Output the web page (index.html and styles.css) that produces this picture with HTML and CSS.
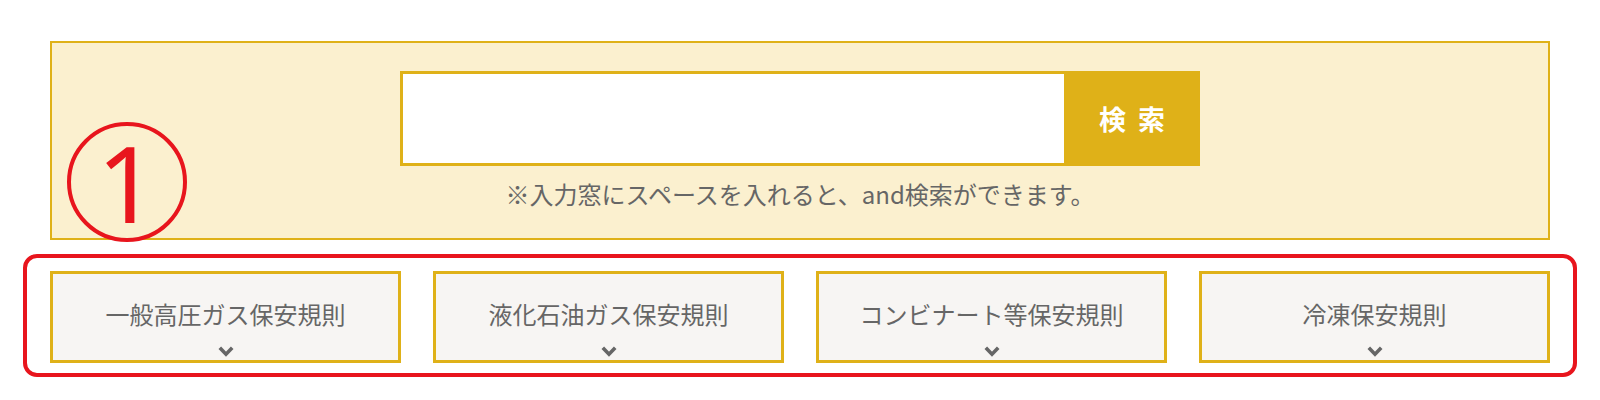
FILE: index.html
```html
<!DOCTYPE html>
<html lang="ja">
<head>
    <meta charset="UTF-8">
    <meta name="viewport" content="width=device-width, initial-scale=1.0">
    <title>規則検索</title>
    <link rel="stylesheet" href="styles.css">
</head>
<body>
    <div class="wrap">
        <div class="search-box">
            <form class="search-form">
                <input class="search-input" type="text">
                <button class="search-btn" type="button">検索</button>
            </form>
            <p class="hint">※入力窓にスペースを入れると、and検索ができます。</p>
            <div class="mark">1</div>
        </div>

        <div class="annot">
            <div class="cards">
                <div class="card">
                    <span class="card-title">一般高圧ガス保安規則</span>
                    <svg class="chev" width="16" height="11" viewBox="0 0 16 11"><path d="M1.8 1.8L8 8.2l6.2-6.4" fill="none" stroke="#666" stroke-width="3.6"/></svg>
                </div>
                <div class="card">
                    <span class="card-title">液化石油ガス保安規則</span>
                    <svg class="chev" width="16" height="11" viewBox="0 0 16 11"><path d="M1.8 1.8L8 8.2l6.2-6.4" fill="none" stroke="#666" stroke-width="3.6"/></svg>
                </div>
                <div class="card">
                    <span class="card-title">コンビナート等保安規則</span>
                    <svg class="chev" width="16" height="11" viewBox="0 0 16 11"><path d="M1.8 1.8L8 8.2l6.2-6.4" fill="none" stroke="#666" stroke-width="3.6"/></svg>
                </div>
                <div class="card">
                    <span class="card-title">冷凍保安規則</span>
                    <svg class="chev" width="16" height="11" viewBox="0 0 16 11"><path d="M1.8 1.8L8 8.2l6.2-6.4" fill="none" stroke="#666" stroke-width="3.6"/></svg>
                </div>
            </div>
        </div>
    </div>
</body>
</html>
```

FILE: styles.css
```css
body {
    margin: 0;
    background-color: #ffffff;
    color: #666666;
    font-family: "Noto Sans CJK JP", "Noto Sans", sans-serif;
}
.wrap {
    width: 1500px;
    margin: 41px auto 0;
}
.search-box {
    position: relative;
    box-sizing: border-box;
    height: 199px;
    padding-top: 28px;
    background-color: #fbf0cf;
    border: 2px solid #dfb118;
}
.search-form {
    display: flex;
    justify-content: center;
    margin: 0;
}
.search-input {
    box-sizing: border-box;
    width: 664px;
    height: 95px;
    margin: 0;
    border: 3px solid #dfb118;
    border-right: none;
    background-color: #ffffff;
    outline: none;
}
.search-btn {
    box-sizing: border-box;
    width: 136px;
    height: 95px;
    margin: 0;
    padding: 0 0 0 12px;
    border: none;
    background-color: #dfb118;
    color: #ffffff;
    font-family: "Noto Sans CJK JP", sans-serif;
    font-size: 27px;
    font-weight: bold;
    letter-spacing: 12px;
    cursor: pointer;
}
.hint {
    margin: 12px 0 0;
    font-size: 24px;
    line-height: 32px;
    text-align: center;
    color: #666666;
}
.mark {
    position: absolute;
    left: 15px;
    top: 79px;
    box-sizing: border-box;
    width: 120px;
    height: 120px;
    border: 4px solid #e8151d;
    border-radius: 50%;
    color: #e8151d;
    font-family: "Noto Sans", sans-serif;
    font-size: 106px;
    line-height: 112px;
    text-align: center;
}
.annot {
    margin: 14px -27px 0;
    padding: 13px 23px 10px;
    border: 4px solid #e8151d;
    border-radius: 14px;
}
.cards {
    display: grid;
    grid-template-columns: repeat(4, 1fr);
    gap: 32px;
}
.card {
    box-sizing: border-box;
    height: 92px;
    padding-top: 24px;
    display: flex;
    flex-direction: column;
    align-items: center;
    background-color: #f7f5f3;
    border: 3px solid #dfb118;
}
.card-title {
    font-size: 24px;
    line-height: 32px;
    color: #666666;
}
.chev {
    margin-top: 16px;
}
```
